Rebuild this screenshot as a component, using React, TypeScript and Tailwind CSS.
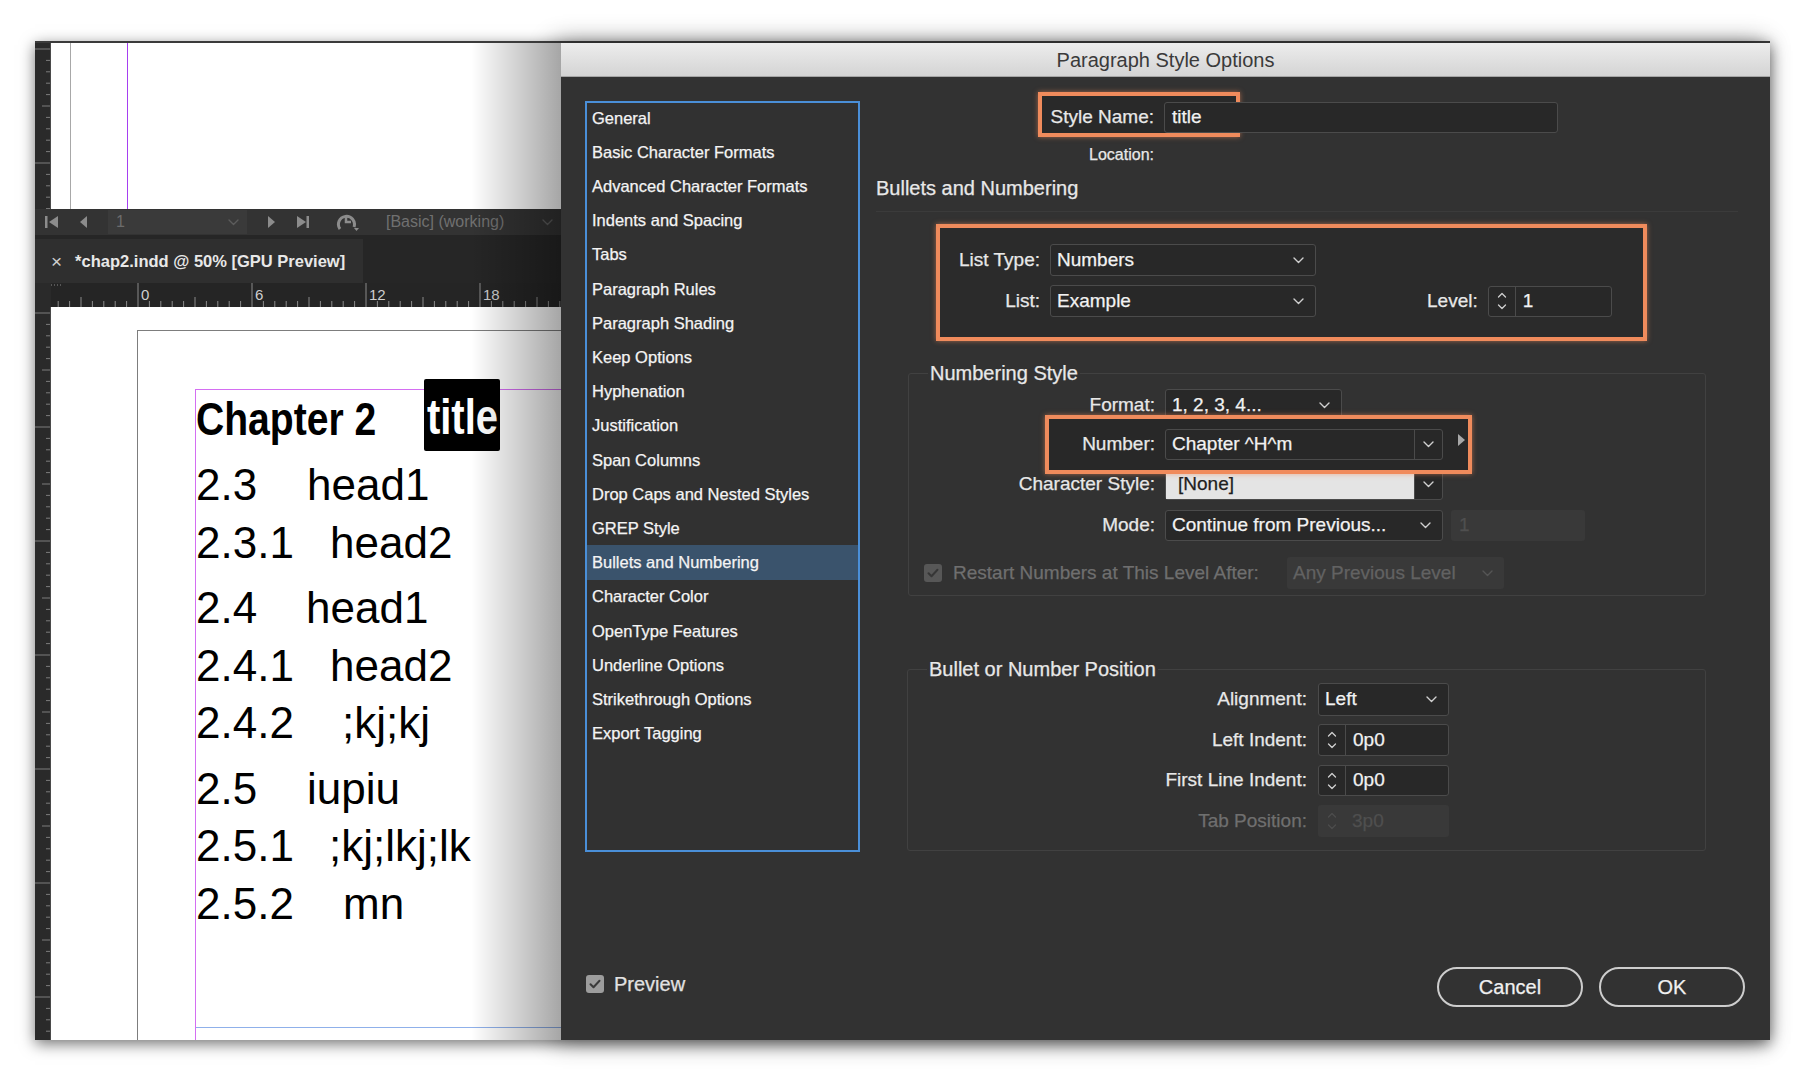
import React from "react";

const ui = "font-['Liberation_Sans',Arial,sans-serif]";

const sections = [
  "General",
  "Basic Character Formats",
  "Advanced Character Formats",
  "Indents and Spacing",
  "Tabs",
  "Paragraph Rules",
  "Paragraph Shading",
  "Keep Options",
  "Hyphenation",
  "Justification",
  "Span Columns",
  "Drop Caps and Nested Styles",
  "GREP Style",
  "Bullets and Numbering",
  "Character Color",
  "OpenType Features",
  "Underline Options",
  "Strikethrough Options",
  "Export Tagging",
];

// page text: number, text, width of the number column, extra space before
const lines = [
  { n: "2.3", t: "head1", w: "w-[111px]", gap: false },
  { n: "2.3.1", t: "head2", w: "w-[134px]", gap: false },
  { n: "2.4", t: "head1", w: "w-[110px]", gap: true },
  { n: "2.4.1", t: "head2", w: "w-[134px]", gap: false },
  { n: "2.4.2", t: ";kj;kj", w: "w-[146px]", gap: false },
  { n: "2.5", t: "iupiu", w: "w-[111px]", gap: true },
  { n: "2.5.1", t: ";kj;lkj;lk", w: "w-[133px]", gap: false },
  { n: "2.5.2", t: "mn", w: "w-[147px]", gap: false },
];

const Chev = ({ color = "#d0d0d0" }: { color?: string }) => (
  <svg width="11" height="7" viewBox="0 0 11 7" className="shrink-0">
    <path d="M1 1l4.5 4.5L10 1" fill="none" stroke={color} strokeWidth="1.4" strokeLinecap="round" strokeLinejoin="round" />
  </svg>
);

const Arrows = ({ color = "#d0d0d0" }: { color?: string }) => (
  <svg width="10" height="22" viewBox="0 0 10 22" className="shrink-0">
    <path d="M1.5 7L5 3.5 8.5 7" fill="none" stroke={color} strokeWidth="1.3" strokeLinecap="round" strokeLinejoin="round" />
    <path d="M1.5 15L5 18.5 8.5 15" fill="none" stroke={color} strokeWidth="1.3" strokeLinecap="round" strokeLinejoin="round" />
  </svg>
);

const Check = ({ dim }: { dim?: boolean }) => (
  <div className={`flex h-[18px] w-[18px] shrink-0 items-center justify-center rounded-[3px] ${dim ? "bg-[#575757]" : "bg-[#9d9d9d]"}`}>
    <svg width="12" height="10" viewBox="0 0 12 10">
      <path d="M1.5 5.2l3 3L10.5 1.8" fill="none" stroke={dim ? "#363636" : "#3a3a3a"} strokeWidth="2" strokeLinecap="round" strokeLinejoin="round" />
    </svg>
  </div>
);

function VRuler({ h }: { h: number }) {
  const ticks = [];
  for (let i = 0; i * 11.4 < h; i++) {
    const y = 6 + i * 11.4;
    const len = i % 10 === 0 ? 16 : i % 5 === 0 ? 9 : 5;
    ticks.push(<line key={i} x1={16 - len} y1={y} x2={16} y2={y} stroke="#7d7d7d" strokeWidth="1" />);
  }
  return (
    <svg width="16" height={h} className="block shrink-0 bg-[#2a2a2a]">
      {ticks}
      <line x1="15.5" y1="0" x2="15.5" y2={h} stroke="#4a4a4a" />
    </svg>
  );
}

function HRuler() {
  const ticks = [];
  for (let i = -7; i < 40; i++) {
    const x = 87 + i * 11.4;
    if (x < 0) continue;
    const len = i % 10 === 0 ? 24 : i % 5 === 0 ? 10 : 6;
    ticks.push(<line key={i} x1={x} y1={24 - len} x2={x} y2={24} stroke="#8a8a8a" strokeWidth="1" />);
    if (i % 10 === 0 && i >= 0)
      ticks.push(
        <text key={"t" + i} x={x + 3} y={17} fill="#cfcfcf" fontSize="15" fontFamily="Liberation Sans, Arial, sans-serif">
          {(i / 10) * 6}
        </text>
      );
  }
  return (
    <svg width="510" height="24" className="block bg-[#252525]">
      <line x1="0" y1="2" x2="12" y2="2" stroke="#8a8a8a" strokeDasharray="1 2" />
      {ticks}
    </svg>
  );
}

function Select({ className, children, split }: { className: string; children: React.ReactNode; split?: boolean }) {
  return (
    <div className={`relative flex items-center rounded-[3px] border border-[#4b4b4b] bg-[#282828] ${className}`}>
      <span className="flex-1 truncate pl-[6px] text-[19px] text-[#f2f2f2]">{children}</span>
      {split ? (
        <span className="flex h-full w-[28px] items-center justify-center border-l border-[#4b4b4b]">
          <Chev />
        </span>
      ) : (
        <span className="pr-[11px]">
          <Chev />
        </span>
      )}
    </div>
  );
}

function Spinner({ className, value, disabled }: { className: string; value: string; disabled?: boolean }) {
  return (
    <div
      className={`relative flex items-center rounded-[3px] ${
        disabled ? "bg-[#393939]" : "border border-[#4b4b4b] bg-[#282828]"
      } ${className}`}
    >
      <span className={`flex h-full w-[27px] items-center justify-center ${disabled ? "" : "border-r border-[#4b4b4b]"}`}>
        <Arrows color={disabled ? "#4d4d4d" : "#d0d0d0"} />
      </span>
      <span className={`pl-[7px] text-[19px] ${disabled ? "text-[#4f4f4f]" : "text-[#f2f2f2]"}`}>{value}</span>
    </div>
  );
}

function DocPane() {
  return (
    <div className="relative flex w-[526px] shrink-0 flex-col">
      {/* pasteboard above */}
      <div className="flex h-[166px]">
        <VRuler h={166} />
        <div className="flex flex-1 bg-white">
          <div className="w-[19px]" />
          <div className="w-px bg-[#a8a8a8]" />
          <div className="w-[56px]" />
          <div className="w-px bg-[#a63ff0]" />
        </div>
      </div>

      {/* page navigation bar */}
      <div className="flex h-[26px] items-center bg-[#333333]">
        <svg width="13" height="14" viewBox="0 0 13 14" className="ml-[10px]">
          <rect x="0" y="1" width="2.5" height="12" fill="#8c8c8c" />
          <path d="M13 1L4 7l9 6z" fill="#8c8c8c" />
        </svg>
        <svg width="7" height="12" viewBox="0 0 7 12" className="ml-[22px]">
          <path d="M7 0L0 6l7 6z" fill="#8c8c8c" />
        </svg>
        <div className="ml-[21px] flex h-[24px] w-[139px] items-center bg-[#3a3a3a]">
          <span className="pl-[8px] text-[16px] text-[#6c6c6c]">1</span>
          <span className="ml-auto mr-[8px]">
            <Chev color="#5c5c5c" />
          </span>
        </div>
        <svg width="7" height="12" viewBox="0 0 7 12" className="ml-[21px]">
          <path d="M0 0l7 6-7 6z" fill="#8c8c8c" />
        </svg>
        <svg width="12" height="14" viewBox="0 0 12 14" className="ml-[22px]">
          <path d="M0 1l9 6-9 6z" fill="#8c8c8c" />
          <rect x="9.5" y="1" width="2.5" height="12" fill="#8c8c8c" />
        </svg>
        <svg width="26" height="20" viewBox="0 0 26 20" className="ml-[27px]">
          <path d="M4 17A8 8 0 1 1 18 15" fill="none" stroke="#8c8c8c" strokeWidth="3" />
          <path d="M10 4v6h5" fill="none" stroke="#8c8c8c" strokeWidth="2.5" />
          <path d="M18 16h5l-2.5 3z" fill="#8c8c8c" />
        </svg>
        <span className="ml-[24px] text-[16px] text-[#707070]">[Basic] (working)</span>
        <span className="ml-auto mr-[8px]">
          <Chev color="#5c5c5c" />
        </span>
      </div>

      {/* document tab */}
      <div className="flex h-[48px] bg-[#262626] pt-[4px]">
        <div className="flex h-[44px] w-[328px] items-center bg-[#2f2f2f]">
          <span className="ml-[16px] text-[19px] leading-none text-[#cfcfcf]">×</span>
          <span className="ml-[13px] whitespace-nowrap text-[16.5px] font-bold text-[#e8e8e8]">*chap2.indd @ 50% [GPU Preview]</span>
        </div>
      </div>

      {/* horizontal ruler */}
      <div className="flex h-[24px]">
        <div className="w-[16px] bg-[#2a2a2a]" />
        <HRuler />
      </div>

      {/* page */}
      <div className="flex flex-1">
        <VRuler h={733} />
        <div className="flex-1 overflow-hidden bg-white">
          <div className="ml-[86px] mt-[23px] h-full border-l border-t border-[#7d7d7d] pl-[57px] pt-[58px]">
            <div className="h-full border-l border-t border-[#d46ef2] font-['Liberation_Sans',Arial,sans-serif] text-black">
              <div className="h-[637px] pt-[6px]">
                <div className="flex h-[46px] items-start">
                  <span className="w-[228px] whitespace-nowrap">
                    <span className="inline-block origin-left scale-x-[0.85] text-[46px] font-bold leading-[46px]">Chapter 2</span>
                  </span>
                  <span className="-mt-[17px] flex h-[72px] w-[76px] justify-center overflow-hidden rounded-[2px] bg-black text-white">
                    <span className="inline-block scale-x-[0.8] text-[50px] font-bold leading-[77px]">title</span>
                  </span>
                </div>
                <div className="mt-[14px]">
                  {lines.map((l) => (
                    <div key={l.n} className={`flex h-[57.5px] whitespace-nowrap text-[44px] leading-[57.5px] ${l.gap ? "mt-[8px]" : ""}`}>
                      <span className={`${l.w} shrink-0`}>{l.n}</span>
                      <span>{l.t}</span>
                    </div>
                  ))}
                </div>
              </div>
              <div className="h-px bg-[#8fb0ea]" />
            </div>
          </div>
        </div>
      </div>

      {/* dialog shadow falling on the document */}
      <div className="pointer-events-none absolute inset-y-0 right-0 w-[90px] bg-gradient-to-r from-transparent to-black/35" />
    </div>
  );
}

function Dialog() {
  return (
    <div className={`flex flex-1 flex-col bg-[#323232] shadow-[-6px_0_24px_rgba(0,0,0,0.45)] ${ui}`}>
      <div className="flex h-[34px] items-center justify-center border-b border-[#a6a6a6] bg-gradient-to-b from-[#ededed] to-[#d4d4d4] text-[20px] text-[#3a3a3a]">
        Paragraph Style Options
      </div>

      <div className="flex flex-1 [-webkit-text-stroke-width:0.25px]">
        {/* section list */}
        <div className="flex w-[315px] shrink-0 flex-col pl-[24px] pt-[24px]">
          <div className="h-[751px] w-[275px] border-2 border-[#4a8fd8] bg-[#313131]">
            {sections.map((s) => (
              <div
                key={s}
                className={`flex h-[34.2px] items-center pl-[5px] text-[16.5px] text-[#f4f4f4] ${
                  s === "Bullets and Numbering" ? "bg-[#3a536c]" : ""
                } ${s === "General" ? "-mt-[2px]" : ""}`}
              >
                {s}
              </div>
            ))}
          </div>
          <div className="mt-[117px] flex items-center">
            <div className="ml-[1px]">
              <Check />
            </div>
            <span className="ml-[10px] text-[20px] text-[#e2e2e2]">Preview</span>
          </div>
        </div>

        {/* settings */}
        <div className="flex flex-1 flex-col pt-[25px] text-[19px] text-[#e8e8e8]">
          <div className="relative flex h-[31px] items-center">
            <div className="absolute left-[162px] top-[-10px] h-[45px] w-[202px] border-[4px] border-[#f08b5c] bg-[#292929] shadow-[0_0_5px_rgba(240,139,92,0.6)]" />
            <span className="relative w-[278px] text-right">Style Name:</span>
            <div className="relative ml-[10px] flex h-[31px] w-[394px] items-center rounded-[3px] border border-[#4b4b4b] bg-[#282828] pl-[7px] text-[#f2f2f2]">
              title
            </div>
          </div>
          <div className="mt-[11px] flex h-[22px] items-center">
            <span className="w-[278px] text-right text-[16px]">Location:</span>
          </div>
          <div className="mt-[9px] h-[26px] text-[20px] leading-[26px]">Bullets and Numbering</div>
          <div className="mt-[10px] h-px w-[862px] bg-[#3b3b3b]" />

          <div className="relative mt-[32px]">
            <div className="absolute left-[60px] top-[-20px] h-[117px] w-[711px] border-[4px] border-[#f08b5c] bg-[#2b2b2b] shadow-[0_0_5px_rgba(240,139,92,0.6)]" />
            <div className="relative flex h-[32px] items-center">
              <span className="w-[164px] text-right">List Type:</span>
              <Select className="ml-[10px] h-[32px] w-[266px]">Numbers</Select>
            </div>
            <div className="relative mt-[9px] flex h-[32px] items-center">
              <span className="w-[164px] text-right">List:</span>
              <Select className="ml-[10px] h-[32px] w-[266px]">Example</Select>
              <span className="ml-[111px]">Level:</span>
              <Spinner className="ml-[10px] h-[31px] w-[124px]" value="1" />
            </div>
          </div>

          <fieldset className="ml-[32px] mt-[44px] w-[798px] rounded-[3px] border border-[#414141] pb-[6px]">
            <legend className="ml-[19px] px-[2px] text-[20px] leading-[24px]">Numbering Style</legend>
            <div className="mt-[4px] flex h-[32px] items-center">
              <span className="w-[246px] text-right">Format:</span>
              <Select className="ml-[10px] h-[32px] w-[177px]">1, 2, 3, 4...</Select>
            </div>
            <div className="relative mt-[8px] flex h-[31px] items-center">
              <div className="absolute left-[136px] top-[-14px] h-[59px] w-[427px] border-[4px] border-[#f08b5c] bg-[#282828] shadow-[0_0_5px_rgba(240,139,92,0.6)]" />
              <span className="relative w-[246px] text-right">Number:</span>
              <Select className="ml-[10px] h-[31px] w-[278px]" split>
                Chapter ^H^m
              </Select>
              <svg width="7" height="12" viewBox="0 0 7 12" className="relative ml-[15px] -mt-[10px]">
                <path d="M0 0l7 6-7 6z" fill="#a8a8a8" />
              </svg>
            </div>
            <div className="mt-[9px] flex h-[31px] items-center">
              <span className="w-[246px] text-right">Character Style:</span>
              <div className="ml-[10px] flex h-[31px] w-[278px] items-center rounded-[3px] border border-[#4b4b4b] bg-[#282828]">
                <span className="flex h-full flex-1 items-center bg-[#e4e4e4] pl-[12px] text-[19px] text-[#1e1e1e]">[None]</span>
                <span className="flex h-full w-[28px] items-center justify-center border-l border-[#4b4b4b]">
                  <Chev />
                </span>
              </div>
            </div>
            <div className="mt-[10px] flex h-[31px] items-center">
              <span className="w-[246px] text-right">Mode:</span>
              <Select className="ml-[10px] h-[31px] w-[278px]">Continue from Previous...</Select>
              <div className="ml-[8px] flex h-[31px] w-[134px] items-center rounded-[3px] bg-[#393939] pl-[8px] text-[#4f4f4f]">1</div>
            </div>
            <div className="mt-[16px] flex h-[32px] items-center text-[#6f6f6f]">
              <div className="ml-[15px]">
                <Check dim />
              </div>
              <span className="ml-[11px] w-[324px] whitespace-nowrap">Restart Numbers at This Level After:</span>
              <div className="ml-[10px] flex h-[32px] w-[217px] items-center rounded-[3px] bg-[#393939] pl-[6px] text-[#626262]">
                <span className="flex-1">Any Previous Level</span>
                <span className="pr-[11px]">
                  <Chev color="#555555" />
                </span>
              </div>
            </div>
          </fieldset>

          <fieldset className="ml-[31px] mt-[61px] w-[799px] rounded-[3px] border border-[#414141] pb-[13px]">
            <legend className="ml-[19px] px-[2px] text-[20px] leading-[24px]">Bullet or Number Position</legend>
            <div className="mt-[2px] flex h-[33px] items-center">
              <span className="w-[399px] text-right">Alignment:</span>
              <Select className="ml-[11px] h-[33px] w-[131px]">Left</Select>
            </div>
            <div className="mt-[8px] flex h-[32px] items-center">
              <span className="w-[399px] text-right">Left Indent:</span>
              <Spinner className="ml-[11px] h-[32px] w-[131px]" value="0p0" />
            </div>
            <div className="mt-[9px] flex h-[31px] items-center">
              <span className="w-[399px] text-right">First Line Indent:</span>
              <Spinner className="ml-[11px] h-[31px] w-[131px]" value="0p0" />
            </div>
            <div className="mt-[9px] flex h-[32px] items-center">
              <span className="w-[399px] text-right text-[#6f6f6f]">Tab Position:</span>
              <Spinner className="ml-[11px] h-[32px] w-[131px]" value="3p0" disabled />
            </div>
          </fieldset>

          <div className="mt-[116px] flex justify-end gap-[16px] pr-[25px]">
            <button className="h-[40px] w-[146px] rounded-full border-2 border-[#cdcdcd] bg-[#323232] text-[20px] text-[#f0f0f0]">
              Cancel
            </button>
            <button className="h-[40px] w-[146px] rounded-full border-2 border-[#cdcdcd] bg-[#323232] text-[20px] text-[#f0f0f0]">
              OK
            </button>
          </div>
        </div>
      </div>
    </div>
  );
}

export default function App() {
  return (
    <div className={`h-[1080px] w-[1807px] overflow-hidden bg-white pl-[35px] pt-[41px] ${ui}`}>
      <div className="flex h-[999px] w-[1735px] border-t-2 border-[#3b3b3b] bg-[#2b2b2b] shadow-[0_4px_14px_rgba(0,0,0,0.55)]">
        <DocPane />
        <Dialog />
      </div>
    </div>
  );
}
